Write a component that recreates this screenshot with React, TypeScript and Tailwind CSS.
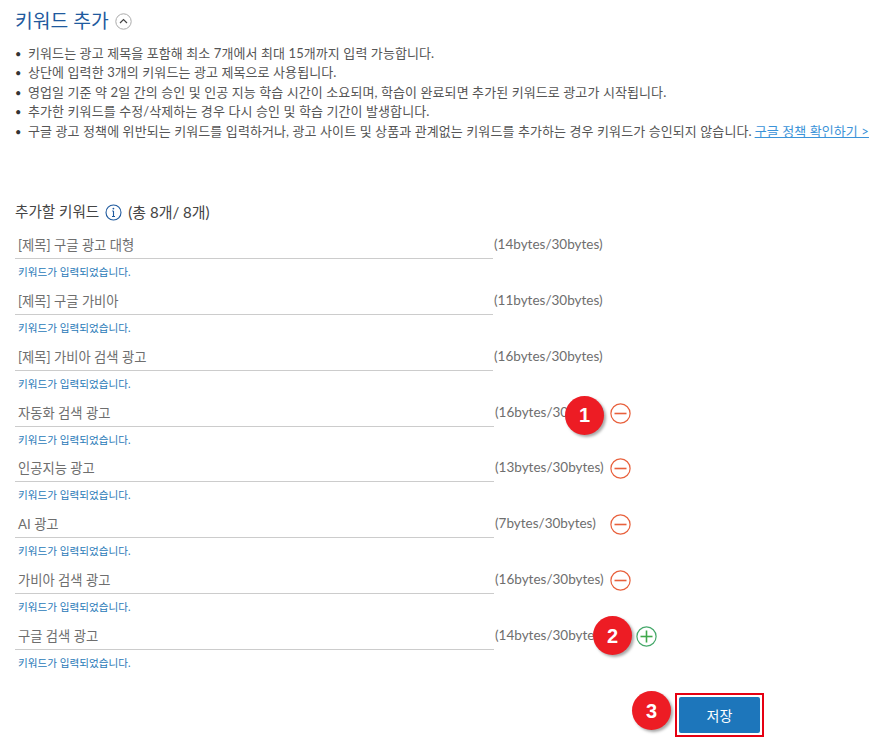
import React from "react";

const notes = [
  "키워드는 광고 제목을 포함해 최소 7개에서 최대 15개까지 입력 가능합니다.",
  "상단에 입력한 3개의 키워드는 광고 제목으로 사용됩니다.",
  "영업일 기준 약 2일 간의 승인 및 인공 지능 학습 시간이 소요되며, 학습이 완료되면 추가된 키워드로 광고가 시작됩니다.",
  "추가한 키워드를 수정/삭제하는 경우 다시 승인 및 학습 기간이 발생합니다.",
  "구글 광고 정책에 위반되는 키워드를 입력하거나, 광고 사이트 및 상품과 관계없는 키워드를 추가하는 경우 키워드가 승인되지 않습니다.",
];

type Row = { text: string; bytes: string; icon?: "minus" | "plus"; badge?: number };
const rows: Row[] = [
  { text: "[제목] 구글 광고 대형", bytes: "(14bytes/30bytes)" },
  { text: "[제목] 구글 가비아", bytes: "(11bytes/30bytes)" },
  { text: "[제목] 가비아 검색 광고", bytes: "(16bytes/30bytes)" },
  { text: "자동화 검색 광고", bytes: "(16bytes/30bytes)", icon: "minus", badge: 1 },
  { text: "인공지능 광고", bytes: "(13bytes/30bytes)", icon: "minus" },
  { text: "AI 광고", bytes: "(7bytes/30bytes)", icon: "minus" },
  { text: "가비아 검색 광고", bytes: "(16bytes/30bytes)", icon: "minus" },
  { text: "구글 검색 광고", bytes: "(14bytes/30bytes)", icon: "plus", badge: 2 },
];

function Badge({ n, className }: { n: number; className: string }) {
  return (
    <div
      className={`absolute flex h-[39px] w-[39px] items-center justify-center rounded-full bg-[#ed1c24] text-[20px] font-bold text-white shadow-[2px_2px_3px_rgba(0,0,0,0.35)] ${className}`}
      style={{ fontFamily: '"Liberation Sans", sans-serif' }}
    >
      {n}
    </div>
  );
}

function RoundIcon({ type }: { type: "minus" | "plus" }) {
  const color = type === "minus" ? "#e8603c" : "#3fa84a";
  return (
    <svg width="21" height="21" viewBox="0 0 21 21" fill="none" className="shrink-0">
      <circle cx="10.5" cy="10.5" r="9.6" stroke={type === "plus" ? "#45a86a" : color} strokeWidth="1.2" />
      <path d="M4.5 10.5H16.5" stroke={color} strokeWidth="1.6" />
      {type === "plus" && <path d="M10.5 4.5V16.5" stroke={color} strokeWidth="1.6" />}
    </svg>
  );
}

export default function App() {
  return (
    <div
      className="relative h-[739px] w-[880px] overflow-hidden bg-white pl-[15px] pt-[8px] text-[#555]"
      style={{ fontFamily: 'Lato, "Noto Sans CJK KR", sans-serif' }}
    >
      <div className="flex h-[26px] items-center gap-[6px]">
        <h1 className="text-[19.3px] font-normal leading-[26px] text-[#1f5a9e]">키워드 추가</h1>
        <svg width="17" height="17" viewBox="0 0 17 17" fill="none" className="mt-[1px]">
          <circle cx="8.5" cy="8.5" r="7.7" stroke="#aaa" strokeWidth="1" />
          <path d="M5 10L8.5 6.5L12 10" stroke="#444" strokeWidth="1.2" />
        </svg>
      </div>

      <ul className="mt-[10px] w-[865px] text-[13px] leading-[19.4px] tracking-[0.09px]">
        {notes.map((t, i) => (
          <li key={i} className="flex whitespace-nowrap">
            <span className="w-[13px] shrink-0 text-[11px] text-[#333]">•</span>
            <span>
              {t}
              {i === 4 && (
                <a className="ml-[3px] text-[#3b93d8] underline">구글 정책 확인하기 &gt;</a>
              )}
            </span>
          </li>
        ))}
      </ul>

      <div className="mt-[60px] flex h-[22px] items-center text-[14.6px] text-[#444]">
        <span>추가할 키워드</span>
        <svg width="17" height="17" viewBox="0 0 17 17" fill="none" className="ml-[6px] mr-[6px]">
          <circle cx="8.5" cy="8.5" r="7.5" stroke="#1f5a9e" strokeWidth="1.1" />
          <path d="M8.5 7V12.5M7 12.5H10M7.2 7H8.5" stroke="#1f5a9e" strokeWidth="1.1" />
          <circle cx="8.4" cy="4.6" r="0.9" fill="#1f5a9e" />
        </svg>
        <span className="text-[15px]">(총 8개/ 8개)</span>
      </div>

      <div className="mt-[11px]">
        {rows.map((r, i) => (
          <div key={i} className="relative h-[55.87px]">
            <div className="flex h-[25px] items-start">
              <div className={`h-[25px] border-b border-[#ccc] pl-[3px] text-[13.3px] leading-[23px] text-[#6e6e6e] ${i > 2 ? "w-[479px]" : "w-[478px]"}`}>
                {r.text}
              </div>
              <span className="ml-[1px] whitespace-nowrap text-[13.5px] leading-[21px] text-[#6e6e6e]">{r.bytes}</span>
              {r.icon && (
                <span className={`absolute top-[1px] flex ${r.icon === "plus" ? "left-[621px]" : "left-[595px]"}`}>
                  <RoundIcon type={r.icon} />
                </span>
              )}
            </div>
            <p className="pl-[3px] pt-[6px] text-[10.6px] leading-[14px] text-[#2a7ab8]">키워드가 입력되었습니다.</p>
            {r.badge === 1 && <Badge n={1} className="left-[550px] top-[-6px]" />}
            {r.badge === 2 && <Badge n={2} className="left-[578px] top-[-9px]" />}
          </div>
        ))}
      </div>

      <Badge n={3} className="left-[632px] top-[691px]" />
      <div className="absolute left-[675px] top-[693px] border-[2px] border-[#e60012] p-[2px]">
        <button className="flex h-[36px] w-[81px] items-center justify-center rounded-[2px] bg-[#1d76bb] text-[14px] text-white">
          저장
        </button>
      </div>
    </div>
  );
}
